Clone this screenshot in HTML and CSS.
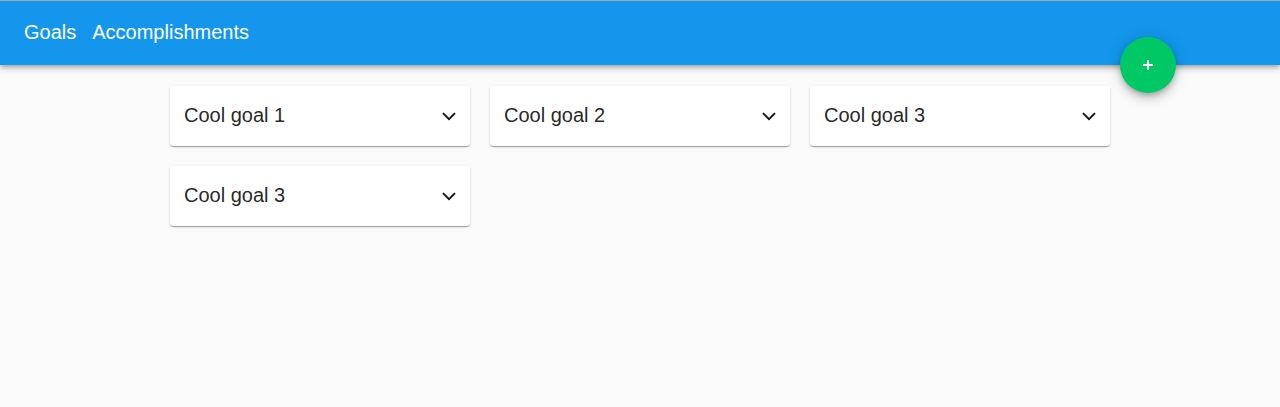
FILE: index.html
```html
<!DOCTYPE html>
<html lang="en">
<head>
<meta charset="utf-8">
<title>Goals</title>
<link rel="stylesheet" href="styles.css">
</head>
<body>
<header class="topbar">
  <nav class="nav">
    <a class="nav-link" href="#">Goals</a>
    <a class="nav-link" href="#">Accomplishments</a>
  </nav>
  <button class="fab" aria-label="Add goal">
    <svg width="10" height="10" viewBox="0 0 10 10" aria-hidden="true"><path d="M5 0v10M0 5h10" stroke="#fff" stroke-width="2" fill="none"/></svg>
  </button>
</header>
<main class="goals">
  <div class="card"><span class="card-title">Cool goal 1</span><svg class="chev" width="14" height="9" viewBox="0 0 14 9"><path d="M1 1.2l6 6 6-6" stroke="#111" stroke-width="1.9" fill="none"/></svg></div>
  <div class="card"><span class="card-title">Cool goal 2</span><svg class="chev" width="14" height="9" viewBox="0 0 14 9"><path d="M1 1.2l6 6 6-6" stroke="#111" stroke-width="1.9" fill="none"/></svg></div>
  <div class="card"><span class="card-title">Cool goal 3</span><svg class="chev" width="14" height="9" viewBox="0 0 14 9"><path d="M1 1.2l6 6 6-6" stroke="#111" stroke-width="1.9" fill="none"/></svg></div>
  <div class="card"><span class="card-title">Cool goal 3</span><svg class="chev" width="14" height="9" viewBox="0 0 14 9"><path d="M1 1.2l6 6 6-6" stroke="#111" stroke-width="1.9" fill="none"/></svg></div>
</main>
</body>
</html>
```
FILE: styles.css
```css
html, body {
  margin: 0;
  padding: 0;
  background: #fafafa;
  font-family: "Liberation Sans", Arial, sans-serif;
  height: 100%;
}
body {
  border-top: 1px solid #a9a9a9;
  box-sizing: border-box;
}
.topbar {
  position: relative;
  height: 64px;
  background: #1396eb;
  display: flex;
  align-items: center;
  padding-left: 24px;
  box-shadow: 0 2px 4px -1px rgba(0,0,0,0.2), 0 4px 5px 0 rgba(0,0,0,0.14), 0 1px 10px 0 rgba(0,0,0,0.12);
  z-index: 2;
}
.nav {
  display: flex;
  gap: 16px;
  margin-top: -1px;
}
.nav-link {
  color: #fff;
  text-decoration: none;
  font-size: 20px;
}
.fab {
  position: absolute;
  top: 36px;
  right: 104px;
  width: 56px;
  height: 56px;
  border-radius: 50%;
  border: none;
  padding: 0;
  background: #00c864;
  display: flex;
  align-items: center;
  justify-content: center;
  box-shadow: 0 3px 5px -1px rgba(0,0,0,0.2), 0 6px 10px 0 rgba(0,0,0,0.14), 0 1px 18px 0 rgba(0,0,0,0.12);
}
.goals {
  width: 940px;
  margin: 0 auto;
  padding-top: 21px;
  display: grid;
  grid-template-columns: repeat(3, 300px);
  gap: 20px;
}
.card {
  height: 60px;
  background: #fff;
  border-radius: 4px;
  box-shadow: 0 2px 1px -1px rgba(0,0,0,0.2), 0 1px 1px 0 rgba(0,0,0,0.14), 0 1px 3px 0 rgba(0,0,0,0.12);
  display: flex;
  align-items: center;
  justify-content: space-between;
  padding: 0 14px 0 14px;
  box-sizing: border-box;
}
.card-title {
  font-size: 20px;
  color: rgba(0,0,0,0.87);
  margin-top: -1px;
}
.chev {
  display: block;
  margin-top: 0;
}
```
